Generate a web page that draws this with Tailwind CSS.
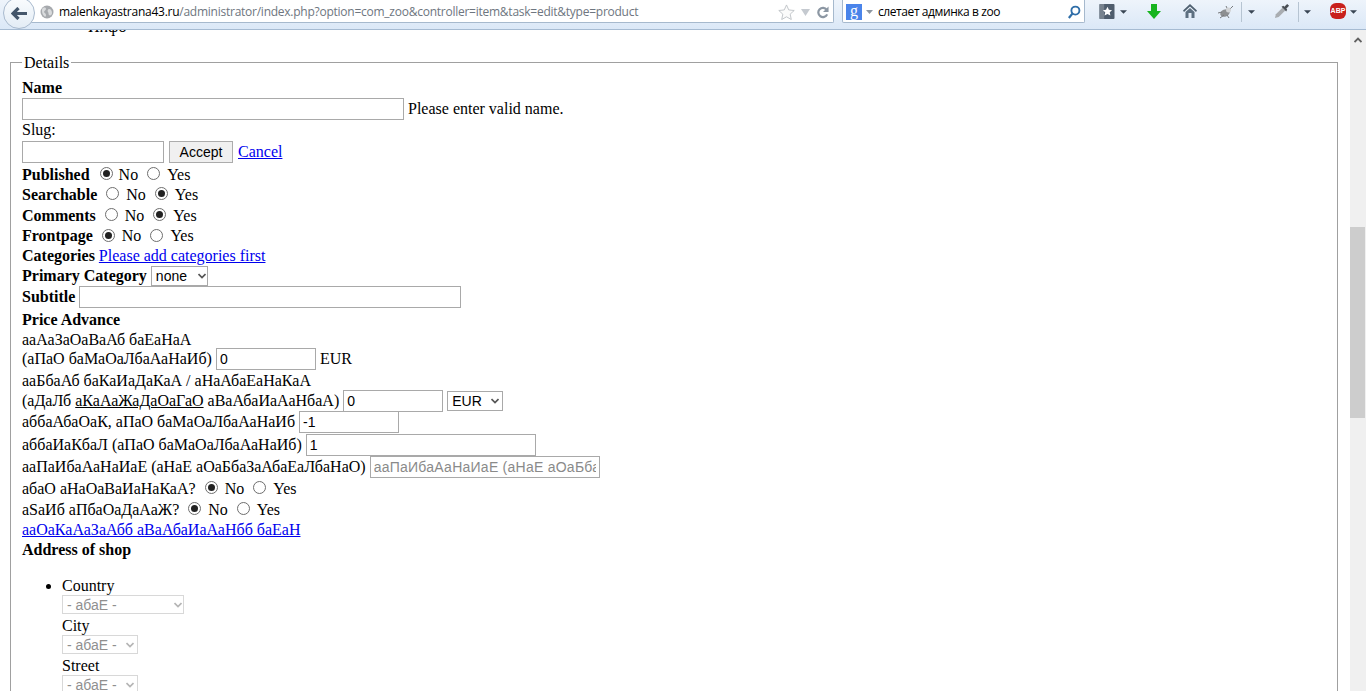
<!DOCTYPE html>
<html lang="en">
<head>
  <meta charset="UTF-8">
  <title>Edit product</title>
  <meta name="viewport" content="width=device-width, initial-scale=1.0">
  <script src="https://cdn.jsdelivr.net/npm/@tailwindcss/browser@4"></script>
</head>
<body class="h-[691px] w-[1366px] overflow-hidden flex flex-col bg-white text-black font-['Liberation_Serif',serif] text-[16px] leading-[18px]">

<!-- browser toolbar -->
<div class="relative z-10 h-[30px] shrink-0 flex items-start bg-gradient-to-b from-[#eef4fb] to-[#dbe8f7] border-b border-[#a6bbd2] font-['Open_Sans',sans-serif]">
  <div class="relative z-10 w-[32px] h-[32px] ml-[3px] -mt-[3px] rounded-full bg-gradient-to-b from-[#fafcfe] to-[#e3ecf5] border border-[#a9bace] flex items-center justify-center shrink-0">
    <svg class="w-[16px] h-[13px] -ml-[1px]" viewBox="0 0 16 13"><path d="M7.500 1 2 6.500 7.500 12M2.500 6.500H16" fill="none" stroke="#44566b" stroke-width="3.200"/></svg>
  </div>
  <div class="w-[804px] h-[23px] pt-[2px] -ml-[5px] bg-white border-r border-b border-[#a6b9cd] rounded-br-[2px] flex items-center shrink-0">
    <svg class="w-[14px] h-[14px] ml-[10px]" viewBox="0 0 14 14"><circle cx="7" cy="7" r="6.500" fill="#a6a9ad"/><path d="M3 3c2-1 3 0 3 1S4 6 4 7s2 1 2 3-1 2-2 1-2-3-2-5 0-2 1-3zm6 1c2 0 3 2 3 4s-2 3-3 2 0-2-1-3 0-3 1-3z" fill="#d9dbdd"/></svg>
    <div class="ml-[5px] w-[590px] text-[12px] leading-[16px] tracking-[-0.25px] whitespace-nowrap text-[#6e7680]"><span class="text-black">malenkayastrana43.ru</span>/administrator/index.php?option=com_zoo&amp;controller=item&amp;task=edit&amp;type=product</div>
    <svg class="w-[17px] h-[16px] ml-[129px]" viewBox="0 0 18 17"><path d="M9 1l2.400 5.300 5.800.6-4.300 3.900 1.200 5.700L9 13.600l-5.100 2.900 1.200-5.700L.8 6.900l5.800-.6z" fill="#fbfbfb" stroke="#bfc3c8"/></svg>
    <svg class="w-[9px] h-[7px] ml-[6px]" viewBox="0 0 9 7"><path d="M0 0h9L4.500 7z" fill="#c5cad0"/></svg>
    <svg class="w-[12px] h-[13px] ml-[7px]" viewBox="0 0 13 13"><path d="M10.500 3.500A5 5 0 1 0 11 8.500" fill="none" stroke="#8c97a3" stroke-width="2.400"/><path d="M12.500 0v6h-6z" fill="#8c97a3"/></svg>
  </div>
  <div class="w-[243px] h-[23px] pt-[2px] ml-[8px] bg-white border-x border-b border-[#a6b9cd] rounded-b-[2px] flex items-center shrink-0">
    <div class="w-[16px] h-[16px] ml-[3px] bg-[#4a84ea] text-white text-[16px] leading-[13px] text-center font-['Liberation_Serif',serif]">g</div>
    <svg class="w-[7px] h-[4px] ml-[4px]" viewBox="0 0 7 4"><path d="M0 0h7L3.500 4z" fill="#8c96a1"/></svg>
    <div class="ml-[5px] w-[180px] text-[12px] leading-[16px] tracking-[-0.42px] whitespace-nowrap">слетает админка в zoo</div>
    <svg class="w-[14px] h-[14px] ml-[9px]" viewBox="0 0 15 15"><circle cx="9" cy="6" r="4.300" fill="none" stroke="#2f6ea8" stroke-width="2"/><path d="M6 9l-4 5" stroke="#2f6ea8" stroke-width="2.400"/></svg>
  </div>

  <svg class="w-[16px] h-[15px] ml-[14px] mt-[4px] shrink-0" viewBox="0 0 16 16"><rect width="16" height="16" rx="1" fill="#4f5d6d"/><rect width="5" height="16" fill="#77828e"/><path d="M8.500 3l1.500 3.200 3.400.4-2.500 2.300.7 3.400-3.100-1.700-3.100 1.700.7-3.400L3.600 6.600 7 6.200z" fill="#fff"/></svg>
  <svg class="w-[7px] h-[4px] ml-[5px] mt-[10px] shrink-0" viewBox="0 0 8 4"><path d="M0 0h8L4 4z" fill="#3a4654"/></svg>
  <svg class="w-[14px] h-[15px] ml-[20px] mt-[4px] shrink-0" viewBox="0 0 14 15"><path d="M4 0h6v7h4L7 15 0 7h4z" fill="#17b41f"/></svg>
  <svg class="w-[14px] h-[14px] ml-[22px] mt-[4px] shrink-0" viewBox="0 0 14 14"><path d="M7 0 0 6.500 1 8l6-5.500L13 8l1-1.500z" fill="#4f6070"/><path d="M2.500 8 7 4l4.500 4v6H8.500V9h-3v5h-3z" fill="#5d6f80"/></svg>
  <svg class="w-[16px] h-[14px] ml-[21px] mt-[5px] shrink-0" viewBox="0 0 16 14"><ellipse cx="7" cy="8" rx="5" ry="3.500" fill="#8d8f91" transform="rotate(-25 7 8)"/><path d="M0 8l4-1M2 13l4-3M11 13l-2-3M15 1l-4 4M8 1l2 4" stroke="#77797c" fill="none"/><circle cx="10.500" cy="5" r="2.500" fill="#d2d4d6"/></svg>
  <div class="w-px h-[20px] ml-[7px] mt-[2px] bg-[#b6c4d2] shrink-0"></div>
  <svg class="w-[7px] h-[4px] ml-[6px] mt-[10px] shrink-0" viewBox="0 0 8 4"><path d="M0 0h8L4 4z" fill="#3a4654"/></svg>
  <svg class="w-[16px] h-[16px] ml-[19px] mt-[3px] shrink-0" viewBox="0 0 17 17"><path d="M1 16l1-4 7-7 3 3-7 7z" fill="#a9adb1"/><path d="M8 4l5 5 1-2-1-1 3-3-2-2-3 3-1-1z" fill="#4a4f55"/></svg>
  <div class="w-px h-[20px] ml-[8px] mt-[2px] bg-[#b6c4d2] shrink-0"></div>
  <svg class="w-[7px] h-[4px] ml-[5px] mt-[10px] shrink-0" viewBox="0 0 8 4"><path d="M0 0h8L4 4z" fill="#3a4654"/></svg>
  <div class="w-[16px] h-[16px] ml-[19px] mt-[3px] rounded-[6px] bg-[#c8201c] text-white font-['Liberation_Sans',sans-serif] font-bold text-[7px] leading-[16px] text-center shrink-0">ABP</div>
  <svg class="w-[7px] h-[4px] ml-[4px] mt-[10px] shrink-0" viewBox="0 0 8 4"><path d="M0 0h8L4 4z" fill="#3a4654"/></svg>
</div>

<div class="flex-1 flex min-h-0">
  <!-- page -->
  <div class="flex-1 overflow-hidden">
    <div class="-mt-[12px] pl-[88px] h-[18px]">Инфо</div>
    <fieldset class="ml-[10px] mr-[12px] mt-[16px] px-[11px] pt-[7px] border border-[#a0a0a0]">
      <legend class="px-[2px] pt-[2px] leading-[18px]">Details</legend>

      <div class="h-[19px] pb-[2px] flex items-center font-bold">Name</div>
      <div class="h-[22px] flex items-center">
        <input type="text" class="w-[382px] h-[22px] border border-[#a9a9a9]">
        <span class="ml-[4px]">Please enter valid name.</span>
      </div>
      <div class="h-[21px] pb-[2px] flex items-center">Slug:</div>
      <div class="h-[22px] flex items-center">
        <input type="text" class="w-[142px] h-[22px] border border-[#a9a9a9]">
        <button type="button" class="ml-[5px] w-[64px] h-[22px] bg-[#f0f0f0] border border-[#acacac] font-['Liberation_Sans',sans-serif] text-[14px]">Accept</button>
        <a href="#" class="ml-[5px] text-[#0000ee] underline">Cancel</a>
      </div>

      <div class="h-[21px] pt-[3px] flex items-center">
        <b>Published</b>
        <span class="w-[13px] h-[13px] ml-[10px] mr-[6px] -mt-[4px] rounded-full border border-[#6e6e6e] flex items-center justify-center"><span class="w-[7px] h-[7px] rounded-full bg-[#222]"></span></span>No
        <span class="w-[13px] h-[13px] ml-[9px] mr-[7px] -mt-[4px] rounded-full border border-[#6e6e6e]"></span>Yes
      </div>
      <div class="h-[21px] flex items-center">
        <b>Searchable</b>
        <span class="w-[13px] h-[13px] ml-[9px] mr-[7px] -mt-[2px] rounded-full border border-[#6e6e6e]"></span>No
        <span class="w-[13px] h-[13px] ml-[9px] mr-[7px] -mt-[2px] rounded-full border border-[#6e6e6e] flex items-center justify-center"><span class="w-[7px] h-[7px] rounded-full bg-[#222]"></span></span>Yes
      </div>
      <div class="h-[21px] flex items-center">
        <b>Comments</b>
        <span class="w-[13px] h-[13px] ml-[9px] mr-[7px] -mt-[2px] rounded-full border border-[#6e6e6e]"></span>No
        <span class="w-[13px] h-[13px] ml-[9px] mr-[7px] -mt-[2px] rounded-full border border-[#6e6e6e] flex items-center justify-center"><span class="w-[7px] h-[7px] rounded-full bg-[#222]"></span></span>Yes
      </div>
      <div class="h-[20px] flex items-center">
        <b>Frontpage</b>
        <span class="w-[13px] h-[13px] ml-[9px] mr-[7px] -mt-[2px] rounded-full border border-[#6e6e6e] flex items-center justify-center"><span class="w-[7px] h-[7px] rounded-full bg-[#222]"></span></span>No
        <span class="w-[13px] h-[13px] ml-[9px] mr-[7px] -mt-[2px] rounded-full border border-[#6e6e6e]"></span>Yes
      </div>
      <div class="h-[20px] flex items-center">
        <b>Categories</b>
        <a href="#" class="ml-[4px] text-[#0000ee] underline">Please add categories first</a>
      </div>
      <div class="h-[21px] pb-[2px] flex items-center">
        <b>Primary Category</b>
        <span class="relative ml-[4px] flex items-center">
          <select class="appearance-none w-[57px] h-[20px] pl-[4px] border border-[#a9a9a9] font-['Liberation_Sans',sans-serif] text-[14px]"><option>none</option></select>
          <svg class="absolute right-[2px] top-[7px] w-[8px] h-[6px]" viewBox="0 0 8 6"><path d="M.5 1 4 4.500 7.500 1" fill="none" stroke="#555" stroke-width="1.700"/></svg>
        </span>
      </div>
      <div class="h-[21px] pb-[2px] flex items-center">
        <b>Subtitle</b>
        <input type="text" class="ml-[4px] w-[382px] h-[22px] border border-[#a9a9a9]">
      </div>

      <div class="h-[21px] pt-[2px] flex items-center font-bold">Price Advance</div>
      <div class="h-[20px] pt-[2px] flex items-center">ааАаЗаОаВаАб баЕаНаА</div>
      <div class="h-[21px] pb-[2px] flex items-center">
        (аПаО баМаОаЛбаАаНаИб)
        <input type="text" value="0" class="ml-[4px] w-[100px] h-[22px] px-[3px] border border-[#a9a9a9] font-['Liberation_Sans',sans-serif] text-[14px]">
        <span class="ml-[4px]">EUR</span>
      </div>
      <div class="h-[21px] flex items-center">ааБбаАб баКаИаДаКаА / аНаАбаЕаНаКаА</div>
      <div class="h-[21px] pb-[2px] flex items-center">
        <span>(аДаЛб <u>аКаАаЖаДаОаГаО</u> аВаАбаИаАаНбаА)</span>
        <input type="text" value="0" class="ml-[4px] w-[100px] h-[22px] px-[3px] border border-[#a9a9a9] font-['Liberation_Sans',sans-serif] text-[14px]">
        <span class="relative ml-[4px] flex items-center">
          <select class="appearance-none w-[56px] h-[20px] pl-[4px] border border-[#a9a9a9] font-['Liberation_Sans',sans-serif] text-[14px]"><option>EUR</option></select>
          <svg class="absolute right-[4px] top-[7px] w-[8px] h-[6px]" viewBox="0 0 8 6"><path d="M.5 1 4 4.500 7.500 1" fill="none" stroke="#555" stroke-width="1.700"/></svg>
        </span>
      </div>
      <div class="h-[22px] pb-[2px] flex items-center">
        аббаАбаОаК, аПаО баМаОаЛбаАаНаИб
        <input type="text" value="-1" class="ml-[4px] w-[100px] h-[22px] px-[3px] border border-[#a9a9a9] font-['Liberation_Sans',sans-serif] text-[14px]">
      </div>
      <div class="h-[22px] flex items-center">
        аббаИаКбаЛ (аПаО баМаОаЛбаАаНаИб)
        <input type="text" value="1" class="ml-[4px] w-[230px] h-[22px] px-[3px] border border-[#a9a9a9] font-['Liberation_Sans',sans-serif] text-[14px]">
      </div>
      <div class="h-[22px] flex items-center">
        ааПаИбаАаНаИаЕ (аНаЕ аОаБбаЗаАбаЕаЛбаНаО)
        <input type="text" placeholder="ааПаИбаАаНаИаЕ (аНаЕ аОаБбаЗаАбаЕаЛбаНаО)" class="ml-[4px] w-[230px] h-[22px] px-[3px] border border-[#a9a9a9] font-['Liberation_Sans',sans-serif] text-[14px] tracking-[0.25px] placeholder:text-[#8a8a8a]">
      </div>
      <div class="h-[21px] flex items-center">
        абаО аНаОаВаИаНаКаА?
        <span class="w-[13px] h-[13px] ml-[9px] mr-[7px] -mt-[2px] rounded-full border border-[#6e6e6e] flex items-center justify-center"><span class="w-[7px] h-[7px] rounded-full bg-[#222]"></span></span>No
        <span class="w-[13px] h-[13px] ml-[9px] mr-[7px] -mt-[2px] rounded-full border border-[#6e6e6e]"></span>Yes
      </div>
      <div class="h-[21px] flex items-center">
        аSаИб аПбаОаДаАаЖ?
        <span class="w-[13px] h-[13px] ml-[9px] mr-[7px] -mt-[2px] rounded-full border border-[#6e6e6e] flex items-center justify-center"><span class="w-[7px] h-[7px] rounded-full bg-[#222]"></span></span>No
        <span class="w-[13px] h-[13px] ml-[9px] mr-[7px] -mt-[2px] rounded-full border border-[#6e6e6e]"></span>Yes
      </div>
      <div class="h-[20px] flex items-center"><a href="#" class="text-[#0000ee] underline">ааОаКаАаЗаАбб аВаАбаИаАаНбб баЕаН</a></div>
      <div class="h-[20px] flex items-center font-bold">Address of shop</div>

      <ul class="mt-[16px] pl-[40px] list-disc">
        <li>
          <div class="h-[19px] leading-[20px]">Country</div>
          <span class="relative block w-[122px] mb-[2px]">
            <select disabled class="appearance-none block w-[122px] h-[19px] pl-[4px] border border-[#d8d8d8] text-[#8f8f8f] font-['Liberation_Sans',sans-serif] text-[14px]"><option>- абаЕ -</option></select>
            <svg class="absolute right-[2px] top-[7px] w-[8px] h-[6px]" viewBox="0 0 8 6"><path d="M.5 1 4 4.500 7.500 1" fill="none" stroke="#b5b5b5" stroke-width="1.700"/></svg>
          </span>
          <div class="h-[19px] leading-[20px]">City</div>
          <span class="relative block w-[76px] mb-[2px]">
            <select disabled class="appearance-none block w-[76px] h-[19px] pl-[4px] border border-[#d8d8d8] text-[#8f8f8f] font-['Liberation_Sans',sans-serif] text-[14px]"><option>- абаЕ -</option></select>
            <svg class="absolute right-[4px] top-[7px] w-[8px] h-[6px]" viewBox="0 0 8 6"><path d="M.5 1 4 4.500 7.500 1" fill="none" stroke="#b5b5b5" stroke-width="1.700"/></svg>
          </span>
          <div class="h-[19px] leading-[20px]">Street</div>
          <span class="relative block w-[76px]">
            <select disabled class="appearance-none block w-[76px] h-[19px] pl-[4px] border border-[#d8d8d8] text-[#8f8f8f] font-['Liberation_Sans',sans-serif] text-[14px]"><option>- абаЕ -</option></select>
            <svg class="absolute right-[4px] top-[7px] w-[8px] h-[6px]" viewBox="0 0 8 6"><path d="M.5 1 4 4.500 7.500 1" fill="none" stroke="#b5b5b5" stroke-width="1.700"/></svg>
          </span>
        </li>
      </ul>
    </fieldset>
  </div>

  <!-- scrollbar -->
  <div class="w-[16px] shrink-0 bg-[#f0f0f0] flex flex-col">
    <div class="h-[197px] pt-[7px] flex justify-center items-start">
      <svg class="w-[8px] h-[6px]" viewBox="0 0 8 6"><path d="M.5 5 4 1.500 7.500 5" fill="none" stroke="#606060" stroke-width="1.800"/></svg>
    </div>
    <div class="h-[191px] w-[15px] bg-[#cdcdcd]"></div>
  </div>
</div>
</body>
</html>
